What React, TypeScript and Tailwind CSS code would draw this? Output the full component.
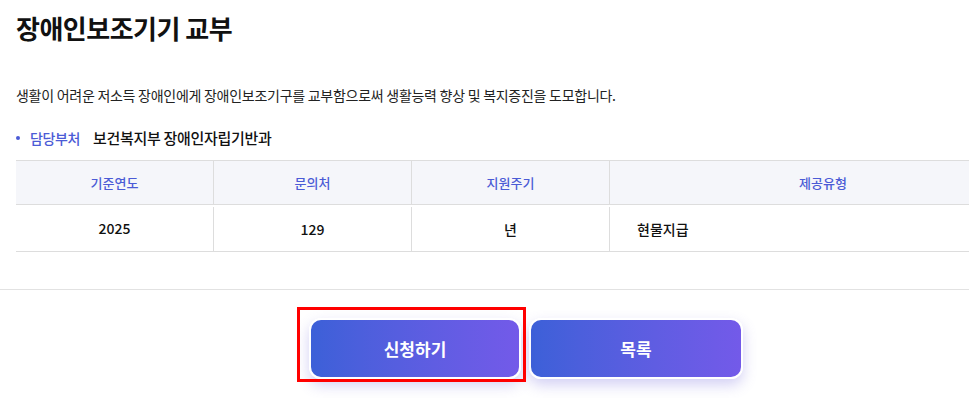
import React from "react";

const font = { fontFamily: '"Noto Sans CJK KR", "Noto Sans", sans-serif' };

export default function App() {
  const headers = ["기준연도", "문의처", "지원주기", "제공유형"];
  return (
    <div className="w-[969px] h-[398px] overflow-hidden bg-white" style={font}>
      <div className="w-[1052px]">
        <div className="px-4">
          <h1 className="pt-[10px] text-[26px] leading-[36px] font-bold text-[#111] tracking-[-0.5px]">장애인보조기기 교부</h1>
          <p className="mt-[39px] text-[14px] leading-[20px] text-[#222] tracking-[-0.27px]">
            생활이 어려운 저소득 장애인에게 장애인보조기구를 교부함으로써 생활능력 향상 및 복지증진을 도모합니다.
          </p>
          <div className="mt-[23px] flex items-center leading-[20px]">
            <span className="w-1 h-1 rounded-full bg-[#4b5bd6] ml-[0px] mr-[10px]" />
            <span className="text-[14px] tracking-[-0.4px] text-[#4b5bd6] font-medium">담당부처</span>
            <span className="ml-[13px] text-[15px] tracking-[-0.3px] text-[#111] font-medium">보건복지부 장애인자립기반과</span>
          </div>
          <div className="mt-[12px] border-t border-b border-[#dddddd]">
            <div className="grid grid-cols-[197px_198px_198px_427px] bg-[#f5f6fa] border-b border-[#dddddd] h-[44px] text-[13px] text-[#4b5bd6] font-medium">
              {headers.map((h, i) => (
                <div key={h} className={`flex items-center justify-center ${i > 0 ? "border-l border-[#dddddd]" : ""}`}>{h}</div>
              ))}
            </div>
            <div className="grid grid-cols-[197px_198px_198px_427px] h-[46px] text-[14px] text-[#111] font-medium">
              <div className="flex items-center justify-center">2025</div>
              <div className="flex items-center justify-center border-l border-[#dddddd] mt-[2px]">129</div>
              <div className="flex items-center justify-center border-l border-[#dddddd] mt-[2px]">년</div>
              <div className="flex items-center pl-[27px] border-l border-[#dddddd] mt-[2px]">현물지급</div>
            </div>
          </div>
        </div>
        <div className="mt-[37px] border-t border-[#e2e2e2]" />
        <div className="mt-[28px] flex justify-center gap-2">
          <div className="relative">
            <button className="w-[212px] h-[61px] rounded-[12px] border-2 border-white text-white text-[17px] font-bold bg-gradient-to-r from-[#3c60d8] to-[#735ae9] shadow-[0_6px_14px_rgba(110,100,220,0.3)]">신청하기</button>
            <div className="absolute left-[-12px] top-[-11px] w-[229px] h-[75px] border-[3px] border-[#ff0000] pointer-events-none" />
          </div>
          <button className="w-[214px] h-[61px] rounded-[12px] border-2 border-white text-white text-[17px] font-bold bg-gradient-to-r from-[#3c60d8] to-[#735ae9] shadow-[0_6px_14px_rgba(110,100,220,0.3)]">목록</button>
        </div>
      </div>
    </div>
  );
}
